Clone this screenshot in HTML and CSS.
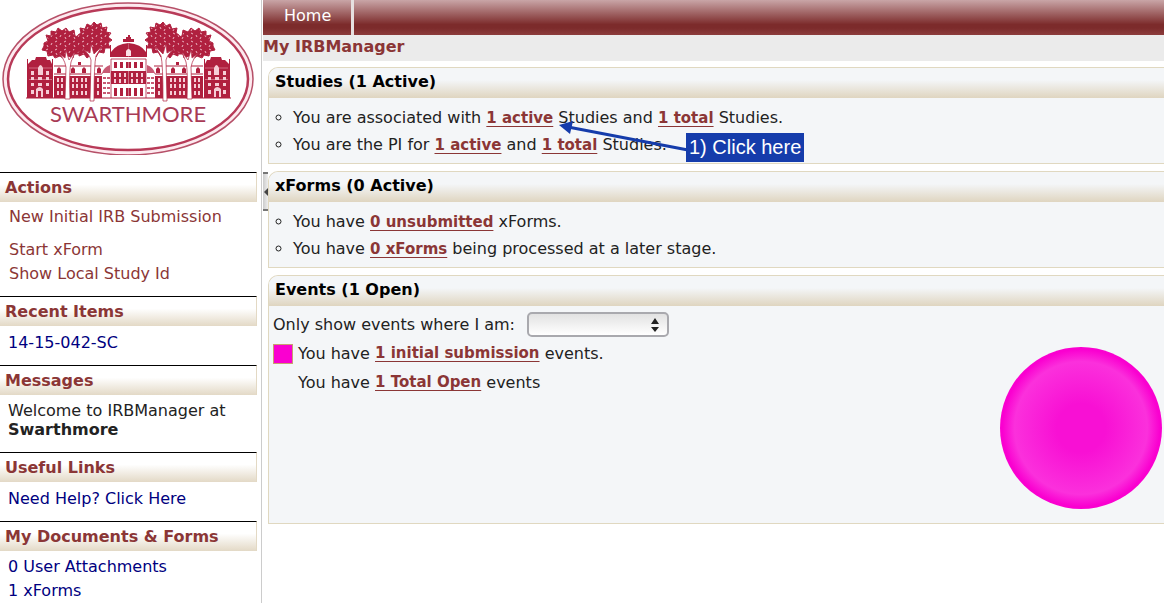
FILE: index.html
```html
<!DOCTYPE html>
<html lang="en">
<head>
  <meta charset="UTF-8">
  <meta name="viewport" content="width=device-width, initial-scale=1.0">
  <title>My IRBManager</title>
  <link rel="stylesheet" href="styles.css">
</head>
<body>
  <div class="page">
    <!-- Sidebar -->
    <aside class="sidebar">
      <svg class="logo" viewBox="0 0 256 155" role="img" aria-label="Swarthmore">
        <defs>
          <pattern id="leaves" width="9" height="8" patternUnits="userSpaceOnUse">
            <rect width="9" height="8" fill="#b0203f"/>
            <path d="M1 2l2-1M6 5l1-2M3 7l-1-2" stroke="#f3c6d0" stroke-width="0.9"/>
          </pattern>
          <g id="half">
            <!-- end pavilion -->
            <path d="M27 98V59h1v5l4-4h3l1-3h10l1 3h3l2 4v-5h1v39z" fill="#b0203f"/>
            <path d="M29 68h23M29 79.500h23" stroke="#e89bad" stroke-width="0.6"/>
            <path d="M31 71h3v4h-3zM38 68q2.500-6 5 0v7h-5zM46 71h3v4h-3zM31 77h3v3h-3zM38 77h4v3h-4zM46 77h3v3h-3zM31 83h3v3h-3zM38 83h4v3h-4zM46 83h3v3h-3zM31 90h3v4h-3zM46 90h3v4h-3zM36 97v-8q4-4 7 0v8h-2v-6h-3v6z" fill="#f6cdd6"/>
            <!-- long wing -->
            <path d="M54 66h49v9H54z" fill="#fff"/>
            <path d="M54 66h49M54 74h49" stroke="#b0203f" stroke-width="1"/>
            <path d="M57 73v-4l2-2 2 2v4zM71 73v-4l2-2 2 2v4zM82 73v-4l2-2 2 2v4zM97 73v-4l2-2 2 2v4zM78 65v-3h3v3z" fill="#b0203f"/>
            <path d="M54 76h48v22H54z" fill="#b0203f"/>
            <path d="M57 78h2v4h-2zM61 78h2v4h-2zM72 78h2v4h-2zM76 78h2v4h-2zM81 78h2v4h-2zM85 78h2v4h-2zM97 78h2v4h-2zM57 84h2v4h-2zM61 84h2v4h-2zM72 84h2v4h-2zM76 84h2v4h-2zM81 84h2v4h-2zM85 84h2v4h-2zM97 84h2v4h-2zM57 91h2v4h-2zM61 91h2v4h-2zM72 91h2v4h-2zM76 91h2v4h-2zM81 91h2v4h-2zM85 91h2v4h-2zM97 91h2v4h-2z" fill="#f6cdd6"/>
            <!-- stepped link to the main hall -->
            <path d="M102 98V74h8v24z" fill="#fff"/>
            <path d="M102 73q2-6 8-8v8zM103 77h3v2h-3zM107 77h3v2h-3zM103 82h3v2h-3zM107 82h3v2h-3zM103 87h3v2h-3zM107 87h3v2h-3zM103 92h3v2h-3zM107 92h3v2h-3z" fill="#c85a74"/>
            <!-- main hall -->
            <path d="M128.500 59H111v39h17.500z" fill="#fff"/>
            <path d="M128.500 59H111v39" fill="none" stroke="#b0203f" stroke-width="0.8"/>
            <path d="M110 57V45h1v7q5-8 17.500-9v14z" fill="#b0203f"/>
            <path d="M111 71h17.500v13H111z" fill="#b0203f"/>
            <path d="M114 62h3v6h-3zM120 62h3v6h-3zM126 62h2.500v6h-2.500zM114 88h3v8h-3zM120 88h3v8h-3zM126 88h2.500v8h-2.500z" fill="#b0203f"/>
            <path d="M114 73h2v4h-2zM119 73h2v4h-2zM124 73h2v4h-2zM114 79h2v4h-2zM119 79h2v4h-2zM124 79h2v4h-2z" fill="#f6cdd6"/>
            <path d="M26 98h102.500" stroke="#b0203f" stroke-width="1.200"/>
            <!-- trees -->
            <path d="M44 43l4-2-2-6 5 1 0-5 5 1 2-4 4 3 4-3 3 4 5-2 1 6 4 1-1 5 4 4-4 3 2 5-6 0-1 4-5-2-4 3-4-3-5 2-2-3-5 1-1-5-5-1 2-4z" fill="url(#leaves)" stroke="#b0203f" stroke-width="1" stroke-linejoin="round"/>
            <path d="M78 35l3-2-1-5 5 1 2-5 4 2 3-4 3 3 4-2 1 5 5-1-1 5 5 1-3 4 4 3-4 3 2 5-5 0-1 5-5-1-3 5-4-3-5 4-3-4-5 2 0-5-5-2 4-4-3-4z" fill="url(#leaves)" stroke="#b0203f" stroke-width="1" stroke-linejoin="round"/>
            <path d="M65 99l1-32q-2-10-9-15l8 6 1-8 3 10 6-8-4 10q-2 8-1 37z" fill="#fff" stroke="#b0203f" stroke-width="0.7"/>
            <path d="M90 101l1-41q-2-7-9-11l8 4 1-9 3 10 8-8-6 10q-2 8-2 45z" fill="#fff" stroke="#b0203f" stroke-width="0.7"/>
          </g>
        </defs>
        <ellipse cx="128" cy="79" rx="125" ry="76" fill="#fdeaef" stroke="#b65068" stroke-width="1.500"/>
        <ellipse cx="128" cy="79" rx="120" ry="71" fill="#fff" stroke="#b83a58" stroke-width="2.500"/>
        <use href="#half"/>
        <use href="#half" transform="translate(257 0) scale(-1 1)"/>
        <path d="M123 42v-3h3v-2h2v-2h2v2h1v2h3v3z" fill="#b0203f"/>
        <path d="M126 56v-5q2.500-4 5 0v5z" fill="#fbe3e8"/>
        <text x="128" y="122" text-anchor="middle" class="logo-name">SWARTHMORE</text>
      </svg>

      <section class="menu">
        <h2>Actions</h2>
        <ul class="actions">
          <li class="spaced"><a href="#">New Initial IRB Submission</a></li>
          <li><a href="#">Start xForm</a></li>
          <li><a href="#">Show Local Study Id</a></li>
        </ul>
      </section>
      <section class="menu">
        <h2>Recent Items</h2>
        <ul>
          <li><a href="#">14-15-042-SC</a></li>
        </ul>
      </section>
      <section class="menu">
        <h2>Messages</h2>
        <p>Welcome to IRBManager at <strong>Swarthmore</strong></p>
      </section>
      <section class="menu">
        <h2>Useful Links</h2>
        <ul>
          <li><a href="#">Need Help? Click Here</a></li>
        </ul>
      </section>
      <section class="menu">
        <h2>My Documents &amp; Forms</h2>
        <ul class="last">
          <li><a href="#">0 User Attachments</a></li>
          <li><a href="#">1 xForms</a></li>
        </ul>
      </section>
    </aside>

    <!-- Content -->
    <main class="content">
      <button class="collapse" type="button" aria-label="Collapse sidebar"></button>
      <nav class="topnav"><a href="#">Home</a></nav>
      <h1>My IRBManager</h1>

      <div class="panels">
        <section class="panel">
          <h2>Studies (1 Active)</h2>
          <ul>
            <li>You are associated with <a href="#">1 active</a> Studies and <a href="#">1 total</a> Studies.</li>
            <li>You are the PI for <a href="#">1 active</a> and <a href="#">1 total</a> Studies.</li>
          </ul>
          <!-- Callout over the studies list -->
          <svg class="arrow" width="134" height="34" viewBox="0 0 134 34" aria-hidden="true">
            <path d="M12 7L132 30" stroke="#153cab" stroke-width="3"/>
            <path d="M3 5L17 1L14 14z" fill="#153cab"/>
          </svg>
          <span class="callout">1) Click here</span>
        </section>

        <section class="panel">
          <h2>xForms (0 Active)</h2>
          <ul>
            <li>You have <a href="#">0 unsubmitted</a> xForms.</li>
            <li>You have <a href="#">0 xForms</a> being processed at a later stage.</li>
          </ul>
        </section>

        <section class="panel">
          <h2>Events (1 Open)</h2>
          <div class="events">
            <div class="event-list">
              <div class="filter">
                <label for="role">Only show events where I am:</label>
                <span class="select">
                  <select id="role"><option></option></select>
                  <svg width="8" height="14" viewBox="0 0 8 14" aria-hidden="true">
                    <path d="M0 6L4 0L8 6zM0 9h8L4 14z" fill="#222"/>
                  </svg>
                </span>
              </div>
              <p><span class="swatch pink"></span>You have <a href="#">1 initial submission</a> events.</p>
              <p><span class="swatch"></span>You have <a href="#">1 Total Open</a> events</p>
            </div>
            <div class="chart"></div>
          </div>
        </section>
      </div>
    </main>
  </div>
</body>
</html>
```
FILE: styles.css
```css
* {
  box-sizing: border-box;
}
body {
  margin: 0;
  font-family: Verdana, "DejaVu Sans", sans-serif;
  font-size: 16px;
  color: #222;
  background: #fff;
}
h1, h2, p, ul {
  margin: 0;
  padding: 0;
}
h1, h2 {
  font-size: 16px;
}
.page {
  display: flex;
  min-height: 100vh;
}

/* Sidebar */
.sidebar {
  flex: none;
  width: 262px;
  border-right: 1px solid #ccc;
}
.logo {
  display: block;
  width: 256px;
  margin-bottom: 17px;
}
.logo-name {
  font-family: Lato, sans-serif;
  font-size: 22px;
  fill: #a83a55;
}
.menu h2 {
  height: 30px;
  margin-right: 4px;
  padding-left: 5px;
  line-height: 29px;
  color: #8b3636;
  border-top: 1px solid #000;
  border-right: 1px solid #e3d9c4;
  background: linear-gradient(#fff 40%, #e3d9c6);
}
.menu ul {
  padding: 5px 0 10px 8px;
  list-style: none;
}
.menu .actions {
  padding: 3px 0 10px 9px;
}
.menu .last {
  padding: 4px 0 0 8px;
}
.menu li {
  line-height: 24px;
}
.menu .spaced {
  margin-bottom: 9px;
}
.menu p {
  padding: 6px 8px 13px;
  line-height: 19px;
}
.menu a {
  color: #000080;
  text-decoration: none;
}
.menu .actions a {
  color: #8b3636;
}

/* Content */
.content {
  position: relative;
  flex: 1;
  min-width: 0;
  margin-left: 1px;
}
.topnav {
  display: flex;
  height: 35px;
  background: linear-gradient(#c9a5a7, #7c2b2b 70%, #7c2b2b 80%, #8c3c3c);
}
.topnav a {
  padding: 0 20px 0 21px;
  line-height: 31px;
  color: #fff;
  text-decoration: none;
  border-right: 3px solid #e6e0e0;
}
.content h1 {
  height: 26px;
  line-height: 24px;
  color: #8b3636;
  background: #ebebeb;
}
.collapse {
  position: absolute;
  top: 172px;
  left: 0;
  width: 5px;
  height: 39px;
  padding: 0;
  border: solid #777;
  border-width: 2px 0;
  background: linear-gradient(90deg, #ccc, #eee);
}
.collapse::after {
  content: "";
  display: block;
  border: 4px solid transparent;
  border-left: 0;
  border-right-color: #444;
}
.panels {
  display: flex;
  flex-direction: column;
  gap: 7px;
  padding: 6px 0 0 5px;
}
.panel {
  position: relative;
  border: 1px solid #e0d8c0;
  border-right: 0;
  border-top-left-radius: 10px;
  background: #f4f6f8;
}
.panel h2 {
  height: 30px;
  padding-left: 6px;
  line-height: 27px;
  color: #000;
  border-top-left-radius: 9px;
  background: linear-gradient(#f4f6f8 40%, #dfd5c0);
}
.panel ul {
  padding: 6px 0 5px 24px;
  list-style: circle;
}
.panel li {
  line-height: 27px;
}
.panel a {
  font-size: 15px;
  font-weight: bold;
  line-height: 1;
  color: #8b3636;
  text-underline-offset: 3px;
  text-decoration-thickness: 1px;
}

/* Callout */
.arrow {
  position: absolute;
  top: 52px;
  left: 287px;
}
.callout {
  position: absolute;
  top: 65px;
  left: 417px;
  padding: 0 3px;
  font-family: Arial, "Liberation Sans", sans-serif;
  font-size: 20px;
  line-height: 29px;
  color: #fff;
  background: #153cab;
}

/* Events */
.events {
  display: flex;
  justify-content: space-between;
  padding: 4px 2px 14px 4px;
}
.filter {
  display: flex;
  align-items: center;
  gap: 12px;
  height: 29px;
}
.select {
  display: grid;
  align-items: center;
}
.select select,
.select svg {
  grid-area: 1 / 1;
}
.select svg {
  justify-self: end;
  margin-right: 10px;
  pointer-events: none;
}
.select select {
  width: 142px;
  height: 25px;
  appearance: none;
  border: 2px solid #a9a9ae;
  border-radius: 5px;
  background: linear-gradient(#e2e2e2, #fff);
}
.event-list p {
  display: flex;
  align-items: center;
  height: 29px;
  white-space: pre;
}
.swatch {
  width: 20px;
  height: 20px;
  margin-right: 5px;
}
.swatch.pink {
  border: 1px solid #c8a070;
  background: #fa00d0;
}
.chart {
  flex: none;
  width: 162px;
  height: 162px;
  margin-top: 37px;
  border-radius: 50%;
  background: radial-gradient(closest-side, #f810d4 30%, #fb30dc 82%, #fa00d0 97%);
}
```
